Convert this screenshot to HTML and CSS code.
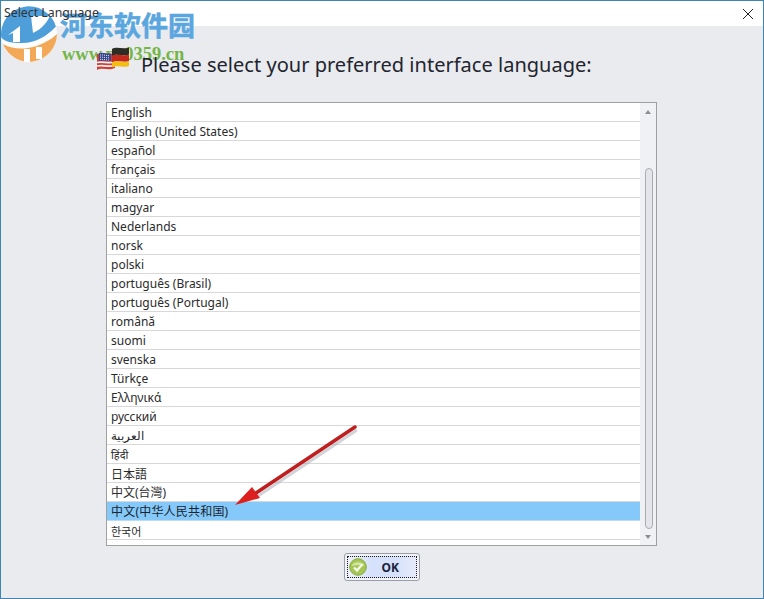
FILE: index.html
```html
<!DOCTYPE html>
<html lang="en">
<head>
<meta charset="utf-8">
<title>Select Language</title>
<link rel="stylesheet" href="styles.css">
</head>
<body>
<div class="window">
  <header class="titlebar">
    <span class="title">Select Language</span>
    <svg class="close" width="12" height="12" viewBox="0 0 12 12"><path d="M1 1L11 11M11 1L1 11" stroke="#222" stroke-width="1" fill="none"/></svg>
  </header>
  <main class="content">
    <div class="heading">
      <svg class="flags" width="34" height="26" viewBox="0 0 34 26">
        <path d="M1 8C7 6 12 9 19 7L19 22C12 25 7 21 1 24Z" fill="#cf3f3a"/>
        <path d="M1 16.500C7 15 12 18 19 16M1 20C7 18.500 12 21.500 19 19.500" stroke="#f6f1ec" stroke-width="1.700" fill="none"/>
        <path d="M3 7C7 6 11 8 15 7.500L15 15C11 15.500 7 13.500 3 15Z" fill="#34478f"/>
        <path d="M4 9C7 8.500 11 10 14 9.500M4 11.200C7 10.700 11 12.200 14 11.700M4 13.400C7 12.900 11 14.400 14 13.900" stroke="#e4e8f4" stroke-width="1" stroke-dasharray="1 1" fill="none"/>
        <path d="M16 3C21 0 27 4 33 1.500L33 8.500C27 11 21 7 16 10Z" fill="#2c2e26"/>
        <path d="M16 10C21 7 27 11 33 8.500L33 15C27 17.500 21 13.500 16 16.500Z" fill="#c3291c"/>
        <path d="M16 16.500C21 13.500 27 17.500 33 15L33 20C27 22.500 21 18.500 16 21.500Z" fill="#f3bd18"/>
      </svg>
      <h1 class="prompt">Please select your preferred interface language:</h1>
    </div>
    <div class="listbox">
      <ul class="items">
        <li class="item">English</li>
        <li class="item">English (United States)</li>
        <li class="item">español</li>
        <li class="item">français</li>
        <li class="item">italiano</li>
        <li class="item">magyar</li>
        <li class="item">Nederlands</li>
        <li class="item">norsk</li>
        <li class="item">polski</li>
        <li class="item">português (Brasil)</li>
        <li class="item">português (Portugal)</li>
        <li class="item">română</li>
        <li class="item">suomi</li>
        <li class="item">svenska</li>
        <li class="item">Türkçe</li>
        <li class="item">Ελληνικά</li>
        <li class="item">русский</li>
        <li class="item arabic">العربية</li>
        <li class="item hindi">हिंदी</li>
        <li class="item cjk-jp">日本語</li>
        <li class="item cjk-tc">中文(台灣)</li>
        <li class="item cjk-sc selected">中文(中华人民共和国)</li>
        <li class="item cjk-kr">한국어</li>
      </ul>
      <div class="scrollbar">
        <span class="arrow up"></span>
        <span class="thumb"></span>
        <span class="arrow down"></span>
      </div>
    </div>
    <div class="actions">
      <button class="ok" type="button">
        <span class="ok-inner">
          <svg class="ok-icon" width="18" height="18" viewBox="0 0 18 18">
            <circle cx="9" cy="9" r="8.300" fill="#a5c655" stroke="#86ac3c"/>
            <path d="M2.500 8A7 6 0 0 1 15.500 8C11 6.500 7 7 2.500 8Z" fill="#d3e6a4"/>
            <path d="M5 9.500L8 12.500L13.500 6" stroke="#f4f8e6" stroke-width="2.400" fill="none"/>
          </svg>
          <span class="ok-label">OK</span>
        </span>
      </button>
    </div>
  </main>
  <svg class="arrow-note" width="130" height="90" viewBox="0 0 130 90">
    <path d="M123 4L24 70" stroke="#9aa2aa" stroke-width="3" opacity=".45" transform="translate(2 3)"/>
    <path d="M123 4L24 70" stroke="#c01f1f" stroke-width="3.500" stroke-linecap="round"/>
    <path d="M3 82L20 64L28 75Z" fill="#dc1f1f"/>
  </svg>
  <div class="watermark">
    <svg class="wm-logo" width="60" height="60" viewBox="0 0 60 60">
      <circle cx="29" cy="29" r="28" fill="#fff" opacity=".9"/>
      <path d="M1.200 32.500A28 28 0 0 1 55.900 21.500C47 31 36 38 22 38C12 38 5 37 1.200 32.500Z" fill="#4d9ed9"/>
      <path d="M3 39C12 44 20 44 28 43C38 41.500 50 36 57 29A28 28 0 0 1 3 39Z" fill="#f2a857"/>
      <path d="M24 44H30V57H24ZM36 42H42V54H36Z" fill="#fff"/>
      <path d="M20 21L20 37L13 37L13 28L8 30Z" fill="#fff"/>
      <path d="M31 11H50C47 17 42 24 33 28Z" fill="#fff"/>
    </svg>
    <span class="wm-name">河东软件园</span>
    <span class="wm-url">www.pc0359.cn</span>
  </div>
</div>
</body>
</html>
```
FILE: styles.css
```css
* { box-sizing: border-box; }
html, body { margin: 0; padding: 0; }
body {
  width: 764px;
  height: 599px;
  overflow: hidden;
  font-family: "Noto Sans", "Open Sans", sans-serif;
  background: #e9ebef;
}
.window {
  position: relative;
  width: 764px;
  height: 599px;
  display: flex;
  flex-direction: column;
  border: 1px solid #3d86b4;
}
.titlebar {
  height: 25px;
  flex: none;
  background: #fff;
  display: flex;
  align-items: center;
  justify-content: space-between;
  padding: 0 9px 0 3px;
}
.title {
  position: relative;
  z-index: 2;
  font: 12.300px/22px "Noto Sans", sans-serif;
  color: #333;
  margin-top: -1px;
}
.content {
  flex: 1;
  display: flex;
  flex-direction: column;
  align-items: flex-start;
  padding: 19px 0 0 105px;
}
.heading {
  position: relative;
  z-index: 2;
  width: 551px;
  height: 57px;
  display: flex;
  align-items: flex-start;
  flex: none;
}
.flags { margin: 1px 0 0 -10px; flex: none; }
.prompt {
  margin: 6px 0 0 11px;
  font: 400 20px/28px "Noto Sans", sans-serif;
  letter-spacing: 0.020px;
  color: #22242e;
  white-space: nowrap;
}
.listbox {
  width: 551px;
  height: 444px;
  flex: none;
  display: flex;
  border: 1px solid #a0a0a0;
  background: #f0f1f4;
}
.items {
  list-style: none;
  margin: 0;
  padding: 0;
  width: 533px;
  height: 100%;
  background: #fff;
}
.item {
  height: 19px;
  padding-left: 4px;
  border-bottom: 1px solid #d8d8d8;
  font: 12px/20px "Noto Sans", "Noto Sans CJK SC", sans-serif;
  color: #2b2b2b;
  white-space: nowrap;
}
.arabic { font-size: 11.500px; }
.hindi { font-size: 11px; }
.cjk-jp { font-family: "Noto Sans CJK JP", sans-serif; }
.cjk-tc { font-family: "Noto Sans", "Noto Sans CJK TC", sans-serif; }
.cjk-sc { font-family: "Noto Sans", "Noto Sans CJK SC", sans-serif; letter-spacing: 0.200px; }
.cjk-kr { font-family: "Noto Sans CJK KR", sans-serif; font-size: 11px; }
.selected { background: #84c9f9; border-bottom-color: #bcdcf3; color: #1c2430; }
.scrollbar {
  flex: 1;
  position: relative;
  display: flex;
  flex-direction: column;
  align-items: center;
  justify-content: space-between;
  padding: 7px 0 6px;
}
.thumb {
  position: absolute;
  top: 65px;
  bottom: 16px;
  left: 5px;
  width: 8px;
  background: #e3e5ea;
  border: 1px solid #a9abb1;
  border-radius: 4px;
}
.arrow { width: 0; height: 0; border-left: 3px solid transparent; border-right: 3px solid transparent; }
.up { border-bottom: 4px solid #8a8d94; }
.down { border-top: 4px solid #8a8d94; }
.actions {
  flex: none;
  width: 551px;
  display: flex;
  justify-content: center;
  padding: 7px 0 0 0;
}
.ok {
  width: 76px;
  height: 28px;
  padding: 2px;
  border: 1px solid #9a9ea8;
  border-radius: 3px;
  background: #f1f3f8;
}
.ok-inner {
  display: flex;
  align-items: center;
  width: 100%;
  height: 100%;
  border: 1px dotted #1c1c1c;
  background: linear-gradient(90deg, #eef1fa, #d6e1fb 35%, #d6e1fb 70%, #e6ebfa);
}
.ok-icon { margin-left: 1px; flex: none; }
.ok-label {
  margin-left: 15px;
  font: 700 12px "Noto Sans", sans-serif;
  color: #1b2340;
}
.arrow-note { position: absolute; left: 231px; top: 422px; }
.watermark {
  position: absolute;
  left: -1px;
  top: 4px;
  width: 210px;
  height: 60px;
  pointer-events: none;
}
.wm-logo { position: absolute; left: 0; top: 0; }
.wm-name {
  position: absolute;
  left: 60px;
  top: 5px;
  font: 700 27px/30px "Noto Sans CJK SC", sans-serif;
  -webkit-text-stroke: 0.500px #5aa6de;
  color: #5aa6de;
}
.wm-url {
  position: absolute;
  left: 62px;
  top: 38px;
  font: 700 18.500px/22px "Liberation Serif", serif;
  color: #74b548;
}
```
